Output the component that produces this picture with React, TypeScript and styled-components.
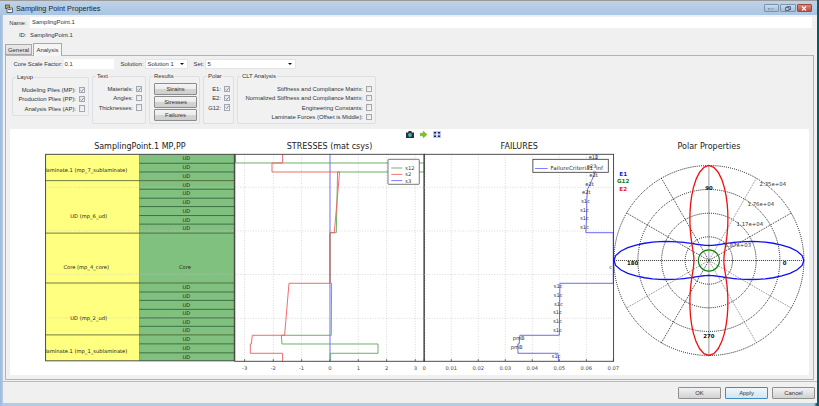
import React from 'react'
import styled, { createGlobalStyle } from 'styled-components'

const GlobalStyle = createGlobalStyle`
  html, body {
    margin: 0;
    padding: 0;
    background: #0b5a6a;
  }
`

const UI_FONT = '"Liberation Sans", Arial, sans-serif'
const PLOT_FONT = '"DejaVu Sans", sans-serif'

const Window = styled.div`
  width: 819px;
  height: 406px;
  display: flex;
  flex-direction: column;
  box-sizing: border-box;
  padding: 0 2px 3px 0;
  overflow: hidden;
  white-space: nowrap;
  font: 5.9px ${UI_FONT};
  color: #30343c;
  background: linear-gradient(90deg, #9db9db 0, #b3cce6 3px, #b3cce6 814px, #0b5a6a 817px);
`

const TitleBar = styled.div`
  height: 15px;
  flex: none;
  display: flex;
  align-items: center;
  gap: 3px;
  padding: 1px 5px 0 5px;
  box-sizing: border-box;
  border-top: 1px solid #9a9a9a;
  background: linear-gradient(#bdd3e8, #a9c5e2);
  font-size: 7.3px;
`

const TitleText = styled.span`
  flex: 1;
  color: #1d2530;
`

const Controls = styled.div`
  display: flex;
  gap: 1px;
  margin-bottom: 1px;
`

const ControlButton = styled.div<{ $close?: boolean }>`
  width: 15.5px;
  height: 8px;
  display: flex;
  align-items: center;
  justify-content: center;
  box-sizing: border-box;
  border: 1px solid ${({ $close }) => ($close ? '#9c4a40' : '#7d93ad')};
  border-radius: 1px;
  background: ${({ $close }) =>
    $close ? 'linear-gradient(#dc8a7c, #bf4c3c)' : 'linear-gradient(#cddded, #a4bdd8)'};
`

const Body = styled.div`
  flex: 1;
  min-height: 0;
  display: flex;
  flex-direction: column;
  margin-left: 3px;
  background: #f0f0f0;
`

const NameRow = styled.div`
  height: 11px;
  margin-top: 2px;
  display: flex;
  align-items: center;
  flex: none;
`

const RowLabel = styled.span`
  width: 23.5px;
  margin-right: 3.5px;
  text-align: right;
  flex: none;
`

const NameInput = styled.div`
  width: 782px;
  height: 11px;
  line-height: 11px;
  padding-left: 2px;
  box-sizing: border-box;
  background: #fff;
`

const IdRow = styled.div`
  height: 11px;
  margin-top: 1px;
  display: flex;
  align-items: center;
  flex: none;
`

const Tabs = styled.div`
  height: 13px;
  margin-top: 2px;
  padding-left: 2px;
  display: flex;
  align-items: flex-end;
  gap: 1px;
  flex: none;
  position: relative;
  z-index: 1;
`

const Tab = styled.div<{ $active?: boolean }>`
  width: ${({ $active }) => ($active ? '29px' : '27px')};
  height: ${({ $active }) => ($active ? '13px' : '11px')};
  margin-bottom: ${({ $active }) => ($active ? '-1px' : '0')};
  box-sizing: border-box;
  display: flex;
  align-items: center;
  justify-content: center;
  border: 1px solid #a8a8a8;
  border-bottom: ${({ $active }) => ($active ? 'none' : '1px solid #a8a8a8')};
  background: ${({ $active }) => ($active ? '#f5f5f5' : 'linear-gradient(#eaeaea, #dcdcdc)')};
`

const Panel = styled.div`
  flex: 1;
  min-height: 0;
  width: 809px;
  margin-left: 2px;
  box-sizing: border-box;
  display: flex;
  flex-direction: column;
  padding: 2.5px 4px 4px;
  border: 1px solid #b4b4b4;
`

const SolutionRow = styled.div`
  height: 10.5px;
  display: flex;
  align-items: center;
  flex: none;
`

const FieldLabel = styled.span<{ $w: number; $gap?: number }>`
  width: ${({ $w }) => $w}px;
  margin-left: ${({ $gap }) => $gap ?? 0}px;
  margin-right: 1px;
  text-align: right;
  flex: none;
`

const TextField = styled.div<{ $w: number }>`
  width: ${({ $w }) => $w}px;
  height: 10.5px;
  line-height: 10.5px;
  padding-left: 1px;
  box-sizing: border-box;
  background: #fff;
  flex: none;
`

const SelectField = styled(TextField)`
  position: relative;
  padding-left: 2px;
  border: 1px solid #e4e4e4;
  line-height: 8.5px;

  &::after {
    content: '';
    position: absolute;
    right: 2.5px;
    top: 3px;
    border-left: 2px solid transparent;
    border-right: 2px solid transparent;
    border-top: 2px solid #111;
  }
`

const Groups = styled.div`
  display: flex;
  align-items: flex-start;
  gap: 3px;
  margin: 6.5px 0 0 2px;
  height: 48px;
  flex: none;
`

const Group = styled.div<{ $w: number; $h: number; $top?: number }>`
  position: relative;
  width: ${({ $w }) => $w}px;
  height: ${({ $h }) => $h}px;
  margin-top: ${({ $top }) => $top ?? 0}px;
  box-sizing: border-box;
  padding: 7.8px 3px 0 0;
  flex: none;
  border: 1px solid #dcdfe3;
  border-radius: 2px;
  background: #f1f1f1;
`

const GroupTitle = styled.span`
  position: absolute;
  top: -4.5px;
  left: 3px;
  padding: 0 1px;
  line-height: 8px;
  background: #f1f1f1;
`

const CheckRow = styled.div`
  height: 9.3px;
  display: flex;
  align-items: center;
  justify-content: flex-end;
  gap: 2.5px;
`

const Box = styled.span`
  width: 6.5px;
  height: 6.5px;
  box-sizing: border-box;
  flex: none;
  display: flex;
  border: 1px solid #a4a8ae;
  background: linear-gradient(135deg, #e2e2e2, #fbfbfb);
`

const ResultButtons = styled.div`
  display: flex;
  flex-direction: column;
  gap: 1.6px;
  margin: -1.3px 0 0 4.4px;
`

const ResultButton = styled.div`
  width: 42.4px;
  height: 11.6px;
  box-sizing: border-box;
  display: flex;
  align-items: center;
  justify-content: center;
  border: 1px solid #8c8c8c;
  border-radius: 1px;
  background: linear-gradient(#f4f4f4 0, #ececec 48%, #d4d4d4 52%, #cfcfcf 100%);
`

const Figure = styled.div`
  flex: 1;
  min-height: 0;
  margin-top: 5.5px;
  display: flex;
  flex-direction: column;
  background: #fff;
`

const FigureTools = styled.div`
  height: 10.5px;
  flex: none;
  display: flex;
  align-items: center;
  padding-left: 396px;
  gap: 6px;
`

const Plots = styled.div`
  flex: 1;
  min-height: 0;
  display: grid;
  grid-template-columns: repeat(4, 189.7px);
  padding-left: 35px;
`

const PlotCell = styled.div`
  display: flex;
  flex-direction: column;
  min-height: 0;
`

const PlotTitle = styled.div`
  height: 13px;
  flex: none;
  line-height: 13px;
  text-align: center;
  font: 8px/13px ${PLOT_FONT};
  color: #222;
  white-space: nowrap;
`

const PlotSvg = styled.svg<{ $clip?: boolean }>`
  display: block;
  width: 189.7px;
  height: 223px;
  overflow: ${({ $clip }) => ($clip ? 'hidden' : 'visible')};
  font-family: ${PLOT_FONT};
  font-size: 5.2px;
`

const Footer = styled.div`
  height: 22px;
  flex: none;
  margin-top: 1px;
  display: flex;
  justify-content: flex-end;
  align-items: flex-start;
  gap: 4px;
  padding: 5px 2px 0 0;
  box-sizing: border-box;
  border-top: 1px solid #bcbcbc;
`

const FooterButton = styled.div<{ $primary?: boolean }>`
  width: 43px;
  height: 12px;
  box-sizing: border-box;
  display: flex;
  align-items: center;
  justify-content: center;
  border: 1px solid ${({ $primary }) => ($primary ? '#3c8fc0' : '#8e8f8f')};
  border-radius: 1px;
  background: ${({ $primary }) =>
    $primary ? 'linear-gradient(#eef7fc, #d3e6f2)' : 'linear-gradient(#f2f2f2, #d2d2d2)'};
`

const Check = ({ on }: { on?: boolean }) => (
  <Box>
    {on && (
      <svg viewBox="0 0 7 7" width="100%" height="100%">
        <path d="M1 3.6 L2.8 5.6 L6 1" fill="none" stroke="#4a6a90" strokeWidth="1" />
      </svg>
    )}
  </Box>
)

const checkGroup = (rows: [string, boolean][]) =>
  rows.map(([label, on]) => (
    <CheckRow key={label}>
      {label}
      <Check on={on} />
    </CheckRow>
  ))

const PLOT_W = 189.7
const TOP = 154.3
const BOTTOM = 361.3
const H_GRID = [187.3, 231, 274.5, 318.3]

const PLY_LINES = [
  163.3, 172, 189.3, 198.3, 206.7, 215.7, 224.3, 292.3, 300.7, 309.7, 318.3, 326.7, 344.3, 353.3,
]
const SECTIONS = [180.7, 233.3, 283.3, 335.3]
const UD_ROWS = [
  158.5, 167, 176, 185, 193.5, 202.5, 211, 220, 228.5, 288, 296.5, 305.5, 314, 323, 331, 340, 349, 357.5,
]

const plotBox = (i: number) => `${45 + i * PLOT_W} 153 ${PLOT_W} 223`

const HGrid = ({ x1, x2 }: { x1: number; x2: number }) => (
  <g stroke="#c8c8c8" strokeWidth="0.7" strokeDasharray="1 1.6">
    {H_GRID.map((y) => (
      <line key={y} x1={x1} x2={x2} y1={y} y2={y} />
    ))}
  </g>
)

const Frame = ({ x1, x2 }: { x1: number; x2: number }) => (
  <g stroke="#3a3a3a" strokeWidth="0.9" fill="none">
    <rect x={x1} y={TOP} width={x2 - x1} height={BOTTOM - TOP} />
  </g>
)

const Ticks = ({ ticks }: { ticks: [number, string][] }) => (
  <>
    <g stroke="#c8c8c8" strokeWidth="0.7" strokeDasharray="1 1.6">
      {ticks.map(([x]) => (
        <line key={x} x1={x} x2={x} y1={TOP} y2={BOTTOM} />
      ))}
    </g>
    <g stroke="#3a3a3a" strokeWidth="0.7">
      {ticks.map(([x]) => (
        <line key={x} x1={x} x2={x} y1={BOTTOM - 2.2} y2={BOTTOM} />
      ))}
    </g>
    <g fill="#444" textAnchor="middle">
      {ticks.map(([x, label]) => (
        <text key={x} x={x} y={370}>
          {label}
        </text>
      ))}
    </g>
  </>
)

const LayupPlot = () => (
  <PlotSvg $clip viewBox={plotBox(0)}>
    <rect x={45} y={TOP} width={94.5} height={BOTTOM - TOP} fill="#ffff80" />
    <rect x={139.5} y={TOP} width={95} height={BOTTOM - TOP} fill="#80c180" />
    <HGrid x1={45} x2={234.5} />
    <line x1={139.5} x2={139.5} y1={TOP} y2={BOTTOM} stroke="#6d8f55" strokeWidth="0.7" />
    <g stroke="#2f5a34" strokeWidth="0.8">
      {PLY_LINES.map((y) => (
        <line key={y} x1={139.5} x2={234.5} y1={y} y2={y} />
      ))}
    </g>
    <g stroke="#4a5a30" strokeWidth="0.8">
      {SECTIONS.map((y) => (
        <line key={y} x1={45} x2={234.5} y1={y} y2={y} />
      ))}
    </g>
    <g fill="#222" textAnchor="end">
      <text x={127.3} y={172.2}>Sublaminate.1 (mp_7_sublaminate)</text>
      <text x={107} y={218}>UD (mp_6_ud)</text>
      <text x={109} y={268.8}>Core (mp_4_core)</text>
      <text x={107} y={320.2}>UD (mp_2_ud)</text>
      <text x={127.3} y={353}>Sublaminate.1 (mp_1_sublaminate)</text>
    </g>
    <g fill="#222" textAnchor="middle">
      {UD_ROWS.map((y) => (
        <text key={y} x={186.5} y={y + 1.8}>UD</text>
      ))}
      <text x={185} y={268.8}>Core</text>
    </g>
    <Frame x1={45.4} x2={234.5} />
  </PlotSvg>
)

const STRESS_TICKS: [number, string][] = [
  [244.3, '-3'],
  [273, '-2'],
  [301.3, '-1'],
  [329.7, '0'],
  [358, '1'],
  [386.3, '2'],
  [415, '3'],
]

const S2 =
  '282.3,154.3 282.3,163 271.7,163 271.7,172 339.3,172 334,232.7 329.7,232.7 329.7,283.3 288.7,283.3 284.3,335.3 252,335.3 251,344 250,344 250,353.3 282.3,353.3 282.3,361.3'
const S12 =
  '235.3,154.3 235.3,163 424,163 424,172 337.3,172 336,232.7 329.7,232.7 329.7,283.3 331.3,283.3 331,335.3 281,335.3 281.7,344 377.7,344 377.7,353.3 330,353.3 330,361.3'

const StressPlot = () => (
  <PlotSvg viewBox={plotBox(1)}>
    <HGrid x1={234.5} x2={424.3} />
    <Ticks ticks={STRESS_TICKS} />
    <line x1={329.7} x2={329.7} y1={TOP} y2={BOTTOM} stroke="#6a6aff" strokeWidth="0.9" />
    <polyline points={S12} fill="none" stroke="#5aa85a" strokeWidth="0.9" />
    <polyline points={S2} fill="none" stroke="#f45a5a" strokeWidth="0.9" />
    <Frame x1={234.5} x2={424.3} />
    <rect x={387.7} y={159.3} width={31.3} height={25} fill="#fff" stroke="#555" strokeWidth="0.8" rx="0.6" />
    <line x1={391} x2={402} y1={168} y2={168} stroke="#4a9f4a" strokeWidth="0.8" />
    <line x1={391} x2={402} y1={174.4} y2={174.4} stroke="#f25050" strokeWidth="0.8" />
    <line x1={391} x2={402} y1={180.6} y2={180.6} stroke="#5a5aff" strokeWidth="0.8" />
    <g fill="#333">
      <text x={405} y={170}>s12</text>
      <text x={405} y={176.4}>s2</text>
      <text x={405} y={182.6}>s3</text>
    </g>
  </PlotSvg>
)

const FAILURE_TICKS: [number, string][] = [
  [424.5, '0'],
  [451.7, '0.01'],
  [478.7, '0.02'],
  [505.7, '0.03'],
  [532.7, '0.04'],
  [559.7, '0.05'],
  [586.8, '0.06'],
  [613.8, '0.07'],
]

const FAILURE_LINE =
  '596.7,154.3 596,163 595.7,172 592,180.7 588,189.3 587.3,198.3 587,215 586.3,232.7 613.7,232.7 613.7,283.3 560.3,283.3 559.7,335.3 520.3,335.3 519.5,344 518.3,344 518.3,353.3 558.3,353.3 559,361.3'

const FAILURE_LABELS: [number, number, string][] = [
  [594, 159.5, 'e12'],
  [592, 168, 'e23'],
  [594, 177, 'e2t'],
  [590, 185.7, 'e2t'],
  [586.7, 194, 'e2t'],
  [586, 203, 's1c'],
  [585, 211.7, 's1c'],
  [585, 220.5, 's1c'],
  [585, 229, 's1c'],
  [611, 268.7, 'c'],
  [558.7, 288, 's1c'],
  [558.7, 297, 's1c'],
  [559, 305.7, 's1c'],
  [558, 314, 's1c'],
  [558, 323, 's1c'],
  [558, 331.7, 's1c'],
  [519, 340.3, 'pmB'],
  [517, 349, 'pmB'],
  [556.7, 358, 's1c'],
]

const FailuresPlot = () => (
  <PlotSvg viewBox={plotBox(2)}>
    <HGrid x1={424.3} x2={614} />
    <Ticks ticks={FAILURE_TICKS} />
    <polyline points={FAILURE_LINE} fill="none" stroke="#5a5af4" strokeWidth="0.9" />
    <Frame x1={424.3} x2={614} />
    <rect x={533.3} y={159.3} width={75.4} height={13} fill="#fff" stroke="#333" strokeWidth="0.8" />
    <line x1={535.5} x2={548} y1={168.5} y2={168.5} stroke="#5a5aff" strokeWidth="0.8" />
    <text x={551} y={170.3} fill="#333" fontSize="5.6">FailureCriteria1_inf</text>
    <g fill="#333" textAnchor="middle">
      {FAILURE_LABELS.map(([x, y, label]) => (
        <text key={y} x={x} y={y}>{label}</text>
      ))}
    </g>
  </PlotSvg>
)

const CX = 709
const CY = 260.5
const RINGS = [23.7, 47.3, 71, 95]
const SPOKES = [0, 30, 60, 90, 120, 150, 180, 210, 240, 270, 300, 330]
const GREY_SPOKES = [60, 210, 300, 330]

const modulus = (t: number) => {
  const c2 = Math.cos(t) ** 2
  const s2 = Math.sin(t) ** 2
  return 1 / ((c2 * c2) / 95 + (s2 * s2) / 15 + c2 * s2 * 0.0887)
}

const lobe = (offset: number) => {
  const pts: string[] = []
  for (let d = 0; d <= 360; d += 3) {
    const t = (d * Math.PI) / 180
    const r = modulus(t - offset)
    pts.push(`${(CX + r * Math.cos(t)).toFixed(2)},${(CY - r * Math.sin(t)).toFixed(2)}`)
  }
  return pts.join(' ')
}

const PolarPlot = () => (
  <PlotSvg viewBox={plotBox(3)}>
    <g fill="none" stroke="#000" strokeWidth="0.9" strokeDasharray="1 1.1">
      {RINGS.map((r) => (
        <circle key={r} cx={CX} cy={CY} r={r} />
      ))}
    </g>
    <g strokeWidth="0.8" strokeDasharray="1 1">
      {SPOKES.map((d) => {
        const t = (d * Math.PI) / 180
        return (
          <line
            key={d}
            x1={CX}
            y1={CY}
            x2={CX + 95 * Math.cos(t)}
            y2={CY - 95 * Math.sin(t)}
            stroke={GREY_SPOKES.includes(d) ? '#666' : '#000'}
          />
        )
      })}
    </g>
    <circle cx={CX} cy={CY} r={10.6} fill="none" stroke="#108010" strokeWidth="1.1" />
    <polyline points={lobe(0)} fill="none" stroke="#1010f0" strokeWidth="1.3" />
    <polyline points={lobe(Math.PI / 2)} fill="none" stroke="#f01010" strokeWidth="1.3" />
    <g fill="#333" fontSize="5.4" textAnchor="middle">
      <text x={773} y={185.6}>2.35e+04</text>
      <text x={761} y={206.2}>1.76e+04</text>
      <text x={750} y={226.2}>1.17e+04</text>
      <text x={738} y={247.2}>5.87e+03</text>
    </g>
    <g fill="#111" fontSize="5.4" fontWeight="bold" textAnchor="middle">
      <text x={CX} y={189.7}>90</text>
      <text x={632.7} y={265.2}>180</text>
      <text x={784.7} y={265.2}>0</text>
      <text x={CX} y={338.3}>270</text>
    </g>
    <g fontSize="5.6" fontWeight="bold" textAnchor="middle">
      <text x={623.3} y={175.8} fill="#1414f0">E1</text>
      <text x={623.3} y={183.5} fill="#108010">G12</text>
      <text x={623.3} y={190.8} fill="#f01414">E2</text>
    </g>
  </PlotSvg>
)

const TitleIcon = () => (
  <svg width="8" height="9" viewBox="0 0 8 9">
    <rect x="0.5" y="1" width="4" height="3.5" fill="#c9a24a" stroke="#3b3b2a" strokeWidth="0.7" />
    <rect x="2" y="4" width="5.5" height="4.5" fill="#eef3f8" stroke="#2c3a4a" strokeWidth="0.7" />
    <rect x="3" y="5" width="3.4" height="1" fill="#4b7f3f" />
  </svg>
)

const CameraIcon = () => (
  <svg width="8" height="7" viewBox="0 0 8 7">
    <path d="M0 1.4 H2 L2.8 0 H5.2 L6 1.4 H8 V7 H0 Z" fill="#2b3034" />
    <circle cx="4" cy="4" r="1.9" fill="#43b4c4" />
  </svg>
)

const ArrowIcon = () => (
  <svg width="7" height="7" viewBox="0 0 7 7">
    <path d="M0 2.2 H3.2 V0 L7 3.5 L3.2 7 V4.8 H0 Z" fill="#7cc224" stroke="#5f9a1c" strokeWidth="0.4" />
  </svg>
)

const FitIcon = () => (
  <svg width="8" height="7" viewBox="0 0 8 7">
    <rect width="8" height="7" fill="#b9c8f4" />
    <path d="M1 1 H3 V2.4 H1 Z M5 1 H7 V2.4 H5 Z M1 4.6 H3 V6 H1 Z M5 4.6 H7 V6 H5 Z" fill="#1c2a5c" />
    <rect x="3.2" y="2.8" width="1.6" height="1.4" fill="#fff" />
  </svg>
)

const App = () => {
  return (
    <Window>
      <GlobalStyle />
      <TitleBar>
        <TitleIcon />
        <TitleText>Sampling Point Properties</TitleText>
        <Controls>
          <ControlButton>
            <svg width="6" height="4" viewBox="0 0 6 4">
              <rect x="0.5" y="2.4" width="5" height="1.2" fill="#fff" stroke="#4a5a70" strokeWidth="0.4" />
            </svg>
          </ControlButton>
          <ControlButton>
            <svg width="6" height="5" viewBox="0 0 6 5">
              <path d="M1.5 0.5 H5.5 V3.5 H4 M0.5 1.5 H4 V4.5 H0.5 Z" fill="none" stroke="#35465c" strokeWidth="0.7" />
            </svg>
          </ControlButton>
          <ControlButton $close>
            <svg width="6" height="5" viewBox="0 0 6 5">
              <path d="M1 0.5 L5 4.5 M5 0.5 L1 4.5" stroke="#fff" strokeWidth="1.1" />
            </svg>
          </ControlButton>
        </Controls>
      </TitleBar>
      <Body>
        <NameRow>
          <RowLabel>Name:</RowLabel>
          <NameInput>SamplingPoint.1</NameInput>
        </NameRow>
        <IdRow>
          <RowLabel>ID:</RowLabel>
          <span>SamplingPoint.1</span>
        </IdRow>
        <Tabs>
          <Tab>General</Tab>
          <Tab $active>Analysis</Tab>
        </Tabs>
        <Panel>
          <SolutionRow>
            <FieldLabel $w={52.5}>Core Scale Factor:</FieldLabel>
            <TextField $w={50}>0.1</TextField>
            <FieldLabel $w={24} $gap={6}>Solution:</FieldLabel>
            <SelectField $w={43}>Solution 1</SelectField>
            <FieldLabel $w={10} $gap={6}>Set:</FieldLabel>
            <SelectField $w={91}>5</SelectField>
          </SolutionRow>
          <Groups>
            <Group $w={77} $h={39} $top={1}>
              <GroupTitle>Layup</GroupTitle>
              {checkGroup([
                ['Modeling Plies (MP):', true],
                ['Production Plies (PP):', true],
                ['Analysis Plies (AP):', false],
              ])}
            </Group>
            <Group $w={54} $h={48}>
              <GroupTitle>Text</GroupTitle>
              {checkGroup([
                ['Materials:', true],
                ['Angles:', false],
                ['Thicknesses:', false],
              ])}
            </Group>
            <Group $w={51} $h={48}>
              <GroupTitle>Results</GroupTitle>
              <ResultButtons>
                <ResultButton>Strains</ResultButton>
                <ResultButton>Stresses</ResultButton>
                <ResultButton>Failures</ResultButton>
              </ResultButtons>
            </Group>
            <Group $w={31} $h={48}>
              <GroupTitle>Polar</GroupTitle>
              {checkGroup([
                ['E1:', true],
                ['E2:', true],
                ['G12:', true],
              ])}
            </Group>
            <Group $w={139} $h={48}>
              <GroupTitle>CLT Analysis</GroupTitle>
              {checkGroup([
                ['Stiffness and Compliance Matrix:', false],
                ['Normalized Stiffness and Compliance Matrix:', false],
                ['Engineering Constants:', false],
                ['Laminate Forces (Offset is Middle):', false],
              ])}
            </Group>
          </Groups>
          <Figure>
            <FigureTools>
              <CameraIcon />
              <ArrowIcon />
              <FitIcon />
            </FigureTools>
            <Plots>
              <PlotCell>
                <PlotTitle>SamplingPoint.1 MP,PP</PlotTitle>
                <LayupPlot />
              </PlotCell>
              <PlotCell>
                <PlotTitle>STRESSES (mat csys)</PlotTitle>
                <StressPlot />
              </PlotCell>
              <PlotCell>
                <PlotTitle>FAILURES</PlotTitle>
                <FailuresPlot />
              </PlotCell>
              <PlotCell>
                <PlotTitle>Polar Properties</PlotTitle>
                <PolarPlot />
              </PlotCell>
            </Plots>
          </Figure>
        </Panel>
        <Footer>
          <FooterButton>OK</FooterButton>
          <FooterButton $primary>Apply</FooterButton>
          <FooterButton>Cancel</FooterButton>
        </Footer>
      </Body>
    </Window>
  )
}

export default App
